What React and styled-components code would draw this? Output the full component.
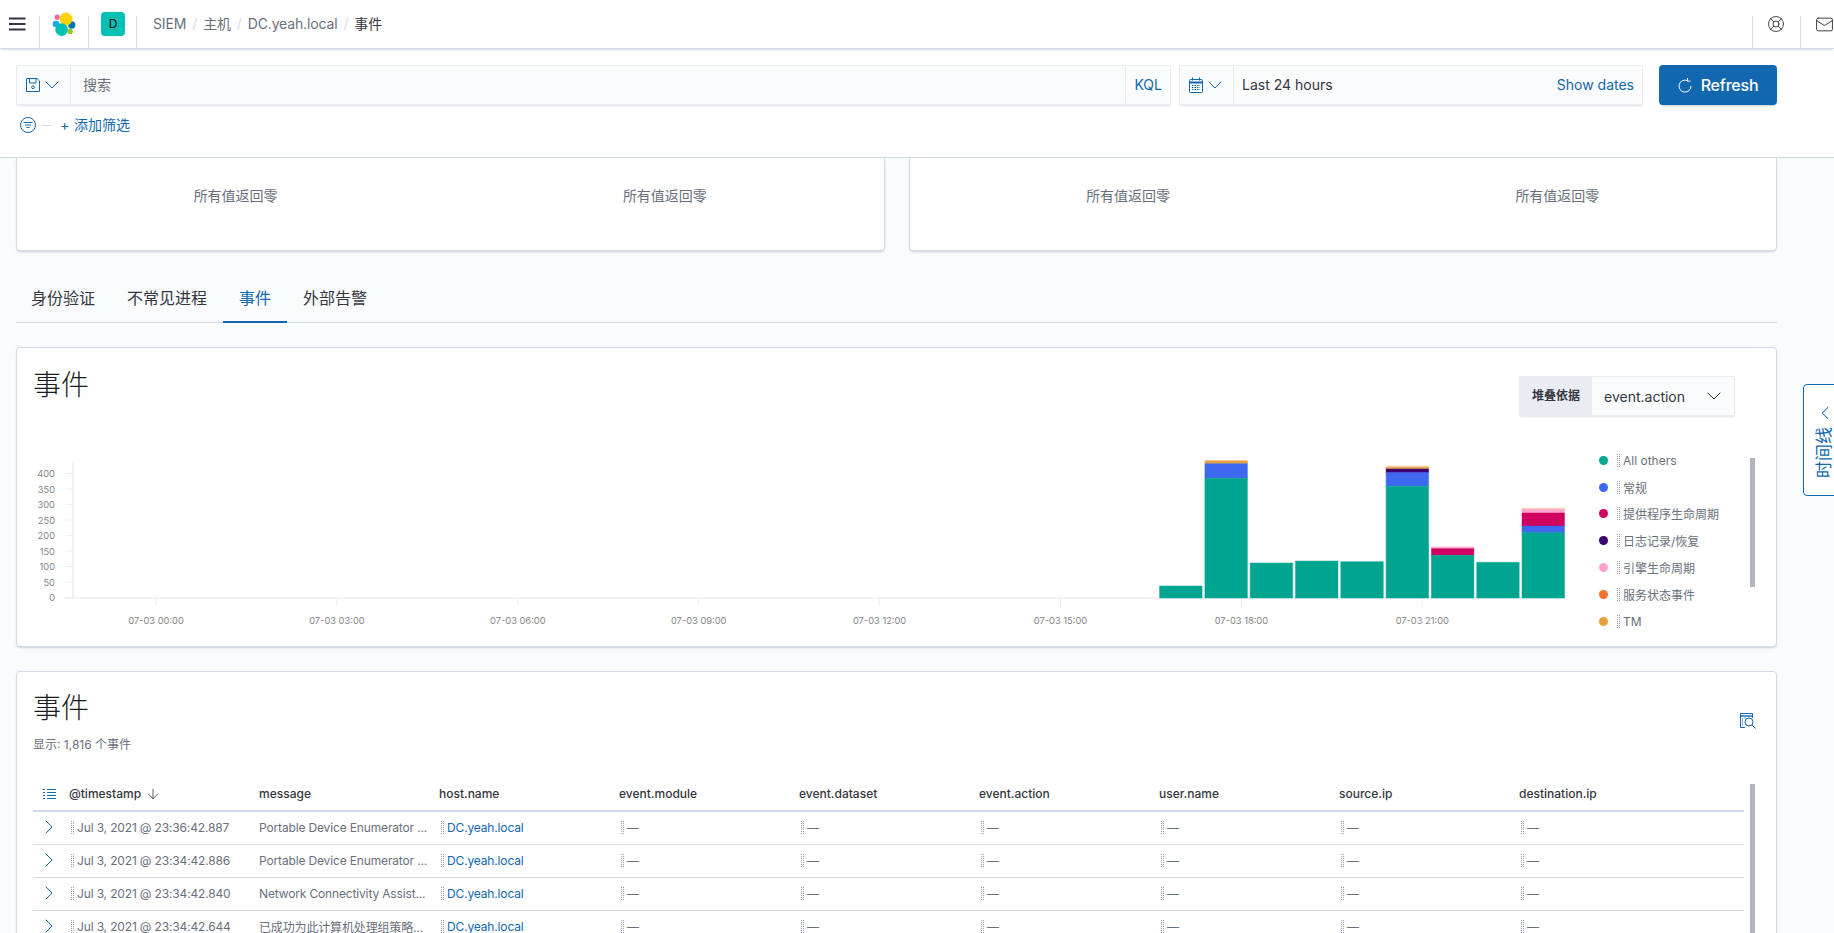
import styled, { createGlobalStyle } from "styled-components";
import { LifeBuoy, Mail, ChevronDown, ChevronLeft, ChevronRight, ArrowDown } from "lucide-react";

const PRIMARY = "#1268b0";
const BORDER = "#d3dae6";
const TEXT = "#343741";
const SUBDUED = "#69707d";
const SHADOW = "0 2px 2px -1px rgba(152,162,179,.35), 0 1px 5px -2px rgba(152,162,179,.35)";
const FONT = `Inter, "Noto Sans CJK SC", "Noto Sans", sans-serif`;

const GREEN = "#00a590";
const BLUE = "#3f68f0";
const RED = "#cf0060";
const PURPLE = "#3b0072";
const PINK = "#ffa3cc";
const ORANGE = "#f5722c";
const TAN = "#e7a03c";
const BEIGE = "#f5c9a8";

const BASELINE = 598;

// each bar is a list of [colour, top y] from the top of the stack down
const BARS = [
  [[GREEN, 586]],
  [[TAN, 460.7], [BLUE, 463.7], [GREEN, 478.3]],
  [[GREEN, 563]],
  [[GREEN, 561]],
  [[GREEN, 561.7]],
  [[BEIGE, 466], [TAN, 467.5], [PURPLE, 469], [BLUE, 472.7], [GREEN, 486.3]],
  [[PINK, 547], [RED, 548.7], [GREEN, 555.3]],
  [[GREEN, 562.3]],
  [[BEIGE, 508.3], [PINK, 509.3], [RED, 513], [BLUE, 526], [GREEN, 532.7]],
];

const Y_TICKS = [400, 350, 300, 250, 200, 150, 100, 50, 0];
const X_TICKS = ["00:00", "03:00", "06:00", "09:00", "12:00", "15:00", "18:00", "21:00"];

const LEGEND = [
  { color: GREEN, label: "All others" },
  { color: BLUE, label: "常规" },
  { color: RED, label: "提供程序生命周期" },
  { color: PURPLE, label: "日志记录/恢复" },
  { color: PINK, label: "引擎生命周期" },
  { color: ORANGE, label: "服务状态事件" },
  { color: TAN, label: "TM" },
];

const COLUMNS = ["event.module", "event.dataset", "event.action", "user.name", "source.ip", "destination.ip"];

const ROWS = [
  { time: "Jul 3, 2021 @ 23:36:42.887", message: "Portable Device Enumerator ..." },
  { time: "Jul 3, 2021 @ 23:34:42.886", message: "Portable Device Enumerator ..." },
  { time: "Jul 3, 2021 @ 23:34:42.840", message: "Network Connectivity Assist..." },
  { time: "Jul 3, 2021 @ 23:34:42.644", message: "已成功为此计算机处理组策略..." },
];

function MenuIcon() {
  return (
    <svg width="17" height="14" viewBox="0 0 17 14" fill="#343741">
      <rect x="0" y="0.5" width="16.5" height="2" />
      <rect x="0" y="6" width="16.5" height="2" />
      <rect x="0" y="11.5" width="16.5" height="2" />
    </svg>
  );
}

function ElasticLogo() {
  return (
    <svg width="24" height="24" viewBox="0 0 24 24">
      <circle cx="5.2" cy="5.2" r="2.6" fill="#f04e98" opacity="0.85" />
      <ellipse cx="4" cy="12" rx="3.4" ry="3.2" fill="#1ba9f5" />
      <ellipse cx="19.8" cy="13" rx="3.6" ry="3.8" fill="#0077a8" />
      <circle cx="14" cy="7" r="6.4" fill="#fed10a" />
      <circle cx="18.2" cy="19.4" r="2.6" fill="#93c90e" />
      <circle cx="9.6" cy="17.6" r="6.3" fill="#00bfb3" />
    </svg>
  );
}

function SaveIcon() {
  return (
    <svg width="14" height="14" viewBox="0 0 14 14" fill="none" stroke={PRIMARY} strokeWidth="1">
      <path d="M.5.5h10.6l2.4 2.4v10.6H.5z" />
      <path d="M3.5.5v4.5h6.5V.5" />
      <circle cx="7" cy="9.2" r="1.4" />
    </svg>
  );
}

function CalendarIcon() {
  return (
    <svg width="14" height="16" viewBox="0 0 14 16" fill="none" stroke={PRIMARY} strokeWidth="1">
      <rect x="0.5" y="2.5" width="13" height="13" rx="1" />
      <path d="M0.5 5.5h13" strokeWidth="2" />
      <path d="M3.5 0.5v3M10.5 0.5v3" />
      <path d="M3 8.5h8M3 10.5h8M3 12.5h8" strokeDasharray="1.5 1" />
    </svg>
  );
}

function RefreshIcon() {
  return (
    <svg width="14" height="16" viewBox="0 0 14 16" fill="none" stroke="#fff" strokeWidth="1">
      <path d="M9.4 3.6a6 6 0 1 0 3.6 5.4" />
      <path d="M9.5 1v3.2h3" />
    </svg>
  );
}

function FilterIcon() {
  return (
    <svg width="16" height="16" viewBox="0 0 16 16" fill="none" stroke={PRIMARY} strokeWidth="1">
      <circle cx="8" cy="8" r="7.5" />
      <path d="M3.5 5.5h9M5 8h6M6.5 10.5h3" />
    </svg>
  );
}

function InspectIcon() {
  return (
    <svg width="16" height="16" viewBox="0 0 16 16" fill="none" stroke={PRIMARY} strokeWidth="1">
      <path d="M5 14.5H.5V.5h12V5" />
      <path d="M1 3h11" strokeWidth="1.4" />
      <path d="M2.5 5.5v7M4.5 4.8h1" strokeDasharray="1 1" />
      <circle cx="9" cy="9" r="4" />
      <path d="M12 12l3.5 3.5" />
    </svg>
  );
}

function ColumnsIcon() {
  return (
    <svg width="13" height="12" viewBox="0 0 13 12" fill="none" stroke={PRIMARY} strokeWidth="1">
      <path d="M0 1.5h2M4 1.5h9M0 4.5h2M4 4.5h9M0 7.5h2M4 7.5h9M0 10.5h2M4 10.5h9" />
    </svg>
  );
}

function EventsChart() {
  return (
    <ChartSvg viewBox="34 455 1560 190" width="1560" height="190">
      <line x1="73" y1="461" x2="73" y2={BASELINE} stroke="#eeeeee" strokeWidth="1.5" />
      <line x1="65" y1={BASELINE} x2="1564" y2={BASELINE} stroke="#eeeeee" strokeWidth="1.5" />
      {Y_TICKS.map((tick, i) => {
        const y = 473.5 + i * 15.5;
        return (
          <g key={tick}>
            <line x1="65" y1={y} x2="73" y2={y} stroke="#eeeeee" />
            <AxisLabel x="55" y={y + 3.5} textAnchor="end">
              {tick}
            </AxisLabel>
          </g>
        );
      })}
      {X_TICKS.map((tick, i) => {
        const x = 156 + i * 180.9;
        return (
          <g key={tick}>
            <line x1={x} y1={BASELINE} x2={x} y2="606" stroke="#eeeeee" />
            <AxisLabel x={x} y="623.5" textAnchor="middle">
              07-03 {tick}
            </AxisLabel>
          </g>
        );
      })}
      {BARS.map((segments, i) =>
        segments.map(([color, top], j) => {
          const bottom = j + 1 < segments.length ? segments[j + 1][1] : BASELINE;
          return (
            <rect
              key={`${i}-${j}`}
              x={1159.6 + i * 45.3}
              y={top}
              width="42.5"
              height={bottom - top}
              fill={color}
              stroke={color}
              strokeOpacity="0.45"
              strokeWidth="1"
            />
          );
        })
      )}
    </ChartSvg>
  );
}

export default function App() {
  return (
    <Page>
      <GlobalStyle />
      <Header>
        <MenuSection $width={40}>
          <MenuIcon />
        </MenuSection>
        <LogoSection $width={49}>
          <ElasticLogo />
        </LogoSection>
        <HeaderSection $width={48}>
          <Avatar>D</Avatar>
        </HeaderSection>
        <Breadcrumbs>
          <Crumb>SIEM</Crumb>
          <Slash>/</Slash>
          <Crumb>主机</Crumb>
          <Slash>/</Slash>
          <Crumb>DC.yeah.local</Crumb>
          <Slash>/</Slash>
          <Crumb $current>事件</Crumb>
        </Breadcrumbs>
        <HeaderRight>
          <HeaderSection $width={48} $divider>
            <LifeBuoy size={18} color={TEXT} strokeWidth={1.2} />
          </HeaderSection>
          <HeaderSection $width={48} $divider>
            <Mail size={19} color={TEXT} strokeWidth={1.2} />
          </HeaderSection>
        </HeaderRight>
      </Header>

      <QueryBar>
        <QueryRow>
          <SearchBox>
            <Prepend $width={54}>
              <SaveIcon />
              <ChevronDown size={24} color={PRIMARY} strokeWidth={1} />
            </Prepend>
            <SearchText>搜索</SearchText>
            <Kql>KQL</Kql>
          </SearchBox>
          <DateBox>
            <Prepend $width={54}>
              <CalendarIcon />
              <ChevronDown size={24} color={PRIMARY} strokeWidth={1} />
            </Prepend>
            <DateText>Last 24 hours</DateText>
            <ShowDates>Show dates</ShowDates>
          </DateBox>
          <RefreshButton>
            <RefreshIcon />
            Refresh
          </RefreshButton>
        </QueryRow>
        <FilterRow>
          <FilterIcon />
          <FilterDash />
          <AddFilter>
            <span>+</span>添加筛选
          </AddFilter>
        </FilterRow>
      </QueryBar>

      <Content>
        <StatRow>
          <StatCard>
            <StatValue>所有值返回零</StatValue>
            <StatValue>所有值返回零</StatValue>
          </StatCard>
          <StatCard>
            <StatValue>所有值返回零</StatValue>
            <StatValue>所有值返回零</StatValue>
          </StatCard>
        </StatRow>

        <Tabs>
          <Tab>身份验证</Tab>
          <Tab>不常见进程</Tab>
          <Tab $active>事件</Tab>
          <Tab>外部告警</Tab>
        </Tabs>

        <ChartCard>
          <ChartHeader>
            <CardTitle>事件</CardTitle>
            <StackSelect>
              <StackLabel>堆叠依据</StackLabel>
              <StackValue>
                event.action
                <ChevronDown size={24} color={TEXT} strokeWidth={1} />
              </StackValue>
            </StackSelect>
          </ChartHeader>
          <ChartBody>
            <EventsChart />
            <Legend>
              {LEGEND.map((item) => (
                <LegendItem key={item.label}>
                  <LegendDot $color={item.color} />
                  <DragHandle />
                  {item.label}
                </LegendItem>
              ))}
            </Legend>
            <LegendThumb />
          </ChartBody>
        </ChartCard>

        <TableCard>
          <TableHeader>
            <div>
              <CardTitle>事件</CardTitle>
              <EventCount>显示: 1,816 个事件</EventCount>
            </div>
            <InspectButton>
              <InspectIcon />
            </InspectButton>
          </TableHeader>
          <TableArea>
            <Table>
              <HeadRow>
                <ExpandCell>
                  <ColumnsIcon />
                </ExpandCell>
                <TimeCell>
                  @timestamp
                  <ArrowDown size={16} color={TEXT} strokeWidth={1.2} />
                </TimeCell>
                <Cell>message</Cell>
                <Cell>host.name</Cell>
                {COLUMNS.map((name, i) => (
                  <Cell key={name} $last={i === COLUMNS.length - 1}>
                    {name}
                  </Cell>
                ))}
              </HeadRow>
              {ROWS.map((row) => (
                <BodyRow key={row.time}>
                  <ExpandCell>
                    <ChevronRight size={24} color={PRIMARY} strokeWidth={1} />
                  </ExpandCell>
                  <TimeCell>
                    <DragHandle />
                    {row.time}
                  </TimeCell>
                  <MessageCell>{row.message}</MessageCell>
                  <Cell>
                    <DragHandle />
                    <HostLink>DC.yeah.local</HostLink>
                  </Cell>
                  {COLUMNS.map((name, i) => (
                    <Cell key={name} $last={i === COLUMNS.length - 1}>
                      <DragHandle />—
                    </Cell>
                  ))}
                </BodyRow>
              ))}
            </Table>
            <TableThumb />
          </TableArea>
        </TableCard>
      </Content>

      <TimelineTab>
        <ChevronLeft size={22} color={PRIMARY} strokeWidth={1.1} />
        <TimelineLabel>时间线</TimelineLabel>
      </TimelineTab>
    </Page>
  );
}

const GlobalStyle = createGlobalStyle`
  html, body {
    margin: 0;
    height: 100%;
    overflow: hidden;
    background: #fafbfd;
  }
  * {
    box-sizing: border-box;
  }
`;

const Page = styled.div`
  position: relative;
  width: 1834px;
  height: 933px;
  overflow: hidden;
  font-family: ${FONT};
  color: ${TEXT};
  background: #fafbfd;
`;

const Header = styled.header`
  display: flex;
  height: 49px;
  background: #fff;
  border-bottom: 1px solid ${BORDER};
  box-shadow: 0 2px 2px -1px rgba(152, 162, 179, 0.4);
  position: relative;
  z-index: 2;
`;

const HeaderSection = styled.div`
  position: relative;
  flex: none;
  display: flex;
  align-items: center;
  justify-content: center;
  width: ${(props) => props.$width}px;
  height: 48px;

  &::after {
    content: "";
    position: absolute;
    top: 16px;
    bottom: 0;
    width: 1px;
    background: ${BORDER};
    ${(props) => (props.$divider ? "left: 0;" : "right: 0;")}
  }
`;

const MenuSection = styled(HeaderSection)`
  padding-right: 6px;
`;

const LogoSection = styled(HeaderSection)`
  padding-right: 2px;
`;

const Avatar = styled.div`
  width: 24px;
  height: 24px;
  border-radius: 4px;
  background: #00bfb3;
  color: #000;
  font-size: 12px;
  line-height: 24px;
  text-align: center;
`;

const Breadcrumbs = styled.nav`
  display: flex;
  align-items: center;
  flex: 1;
  padding: 0 0 2px 16px;
  font-size: 14px;
  letter-spacing: -0.15px;
`;

const Crumb = styled.span`
  color: ${(props) => (props.$current ? TEXT : SUBDUED)};
`;

const Slash = styled.span`
  color: ${BORDER};
  margin: 0 6px;
`;

const HeaderRight = styled.div`
  display: flex;
  flex: none;
  margin-right: -14px;
`;

const QueryBar = styled.section`
  height: 109px;
  padding: 16px 57px 0 16px;
  background: #fff;
  border-bottom: 1px solid ${BORDER};
`;

const QueryRow = styled.div`
  display: flex;
  height: 40px;
`;

const InputShell = styled.div`
  display: flex;
  align-items: center;
  height: 40px;
  background: #fbfcfd;
  border: 1px solid #e9edf3;
  box-shadow: 0 2px 2px -1px rgba(152, 162, 179, 0.3);
  font-size: 14px;
`;

const SearchBox = styled(InputShell)`
  flex: 1;
`;

const DateBox = styled(InputShell)`
  flex: none;
  width: 464px;
  margin-left: 8px;
`;

const Prepend = styled.div`
  flex: none;
  display: flex;
  align-items: center;
  justify-content: center;
  width: ${(props) => props.$width}px;
  height: 100%;
  padding-left: 3px;
  border-right: 1px solid #e9edf3;
`;

const SearchText = styled.span`
  flex: 1;
  padding: 0 0 2px 12px;
  color: ${SUBDUED};
`;

const Kql = styled.span`
  display: flex;
  align-items: center;
  height: 100%;
  padding: 0 8px 2px;
  border-left: 1px solid #e9edf3;
  color: ${PRIMARY};
`;

const DateText = styled.span`
  flex: 1;
  padding: 0 0 2px 8px;
`;

const ShowDates = styled.span`
  padding: 0 8px 2px 0;
  color: ${PRIMARY};
`;

const RefreshButton = styled.button`
  flex: none;
  display: flex;
  align-items: center;
  justify-content: center;
  gap: 9px;
  width: 118px;
  height: 40px;
  margin-left: 16px;
  padding: 0 0 1px;
  border: none;
  border-radius: 4px;
  background: ${PRIMARY};
  color: #fff;
  font-family: ${FONT};
  font-size: 16px;
  font-weight: 500;
  letter-spacing: -0.2px;
  box-shadow: 0 2px 2px -1px rgba(54, 97, 126, 0.3);
`;

const FilterRow = styled.div`
  display: flex;
  align-items: center;
  height: 20px;
  margin-top: 10px;
  padding-left: 4px;
`;

const FilterDash = styled.div`
  width: 10px;
  height: 1px;
  margin: 0 8px 0 6px;
  background: ${BORDER};
`;

const AddFilter = styled.span`
  padding-bottom: 2px;
  color: ${PRIMARY};
  font-size: 14px;

  span {
    display: inline-block;
    width: 14px;
  }
`;

const Content = styled.main`
  padding: 0 57px 0 16px;
`;

const StatRow = styled.div`
  display: flex;
  gap: 24px;
`;

const StatCard = styled.div`
  flex: 1;
  display: grid;
  grid-template-columns: 1fr 1fr;
  height: 93px;
  padding: 0 4px;
  background: #fff;
  border: 1px solid ${BORDER};
  border-top: none;
  border-radius: 0 0 4px 4px;
  box-shadow: ${SHADOW};
`;

const StatValue = styled.div`
  padding-top: 28px;
  font-size: 14px;
  line-height: 20px;
  text-align: center;
  color: ${SUBDUED};
`;

const Tabs = styled.div`
  display: flex;
  height: 48px;
  margin-top: 24px;
  border-bottom: 1px solid ${BORDER};
`;

const Tab = styled.div`
  height: 48px;
  padding: 0 16px;
  font-size: 16px;
  line-height: 47px;
  color: ${(props) => (props.$active ? PRIMARY : TEXT)};
  border-bottom: 2px solid ${(props) => (props.$active ? PRIMARY : "transparent")};

  &:first-child {
    padding-left: 15px;
  }
`;

const Card = styled.section`
  margin-top: 24px;
  padding-left: 17px;
  padding-right: 21px;
  background: #fff;
  border: 1px solid ${BORDER};
  border-radius: 4px;
  box-shadow: ${SHADOW};
`;

const ChartCard = styled(Card)`
  height: 300px;
  padding-top: 19px;
`;

const ChartHeader = styled.div`
  display: flex;
  justify-content: space-between;
  align-items: flex-start;
  height: 49px;
  padding-right: 20px;
`;

const CardTitle = styled.h2`
  margin: 0 0 0 -1px;
  font-size: 28px;
  font-weight: 300;
  line-height: 36px;
  color: #1a1c21;
`;

const StackSelect = styled.div`
  display: flex;
  width: 216px;
  height: 40px;
  margin-top: 9px;
  border: 1px solid #e9edf3;
  box-shadow: 0 2px 2px -1px rgba(152, 162, 179, 0.3);
`;

const StackLabel = styled.div`
  flex: none;
  width: 72px;
  background: #e9edf3;
  font-size: 12px;
  font-weight: 700;
  line-height: 38px;
  text-align: center;
`;

const StackValue = styled.div`
  flex: 1;
  display: flex;
  align-items: center;
  justify-content: space-between;
  padding: 0 8px 0 12px;
  background: #fbfcfd;
  font-size: 14px;
`;

const ChartBody = styled.div`
  display: flex;
  margin-top: 39px;
`;

const ChartSvg = styled.svg`
  display: block;
  flex: none;
`;

const AxisLabel = styled.text`
  font-family: ${FONT};
  font-size: 9.3px;
  fill: #858585;
`;

const Legend = styled.ul`
  flex: 1;
  margin: -8px 0 0 5px;
  padding: 0;
  list-style: none;
`;

const LegendItem = styled.li`
  display: flex;
  align-items: center;
  height: 26.8px;
  font-size: 12px;
  color: ${SUBDUED};
`;

const LegendDot = styled.span`
  flex: none;
  width: 9px;
  height: 9px;
  margin-right: 9px;
  border-radius: 50%;
  background: ${(props) => props.$color};
`;

const DragHandle = styled.span`
  display: inline-block;
  flex: none;
  width: 3px;
  height: 13px;
  margin-right: 3px;
  vertical-align: -2px;
  border-left: 1px dotted #98a2b3;
  border-right: 1px dotted #98a2b3;
`;

const Thumb = styled.div`
  flex: none;
  width: 5px;
  background: #b2b5bc;
`;

const LegendThumb = styled(Thumb)`
  height: 129px;
  margin-top: 3px;
`;

const TableCard = styled(Card)`
  padding-top: 18px;
  padding-left: 16px;
`;

const TableHeader = styled.div`
  display: flex;
  justify-content: space-between;
  padding-left: 1px;
  height: 87px;
`;

const EventCount = styled.div`
  margin: 10px 0 0 -1px;
  font-size: 12px;
  line-height: 18px;
  color: ${SUBDUED};
`;

const InspectButton = styled.div`
  margin-top: 23px;
  margin-right: -1px;
`;

const TableArea = styled.div`
  display: flex;
  gap: 6px;
`;

const Table = styled.div`
  flex: none;
  width: 1711px;
  font-size: 12px;
`;

const HeadRow = styled.div`
  display: flex;
  align-items: center;
  height: 35px;
  border-bottom: 2px solid ${BORDER};
  font-weight: 500;
`;

const BodyRow = styled.div`
  display: flex;
  align-items: center;
  height: 33px;
  padding-bottom: 2px;
  border-bottom: 1px solid ${BORDER};
  color: ${SUBDUED};
  letter-spacing: -0.15px;
`;

const ExpandCell = styled.div`
  flex: none;
  display: flex;
  justify-content: center;
  width: 36px;
  padding-right: 4px;
`;

const TimeCell = styled.div`
  flex: none;
  display: flex;
  align-items: center;
  gap: 4px;
  width: 190px;

  ${BodyRow} & {
    gap: 0;
    padding-left: 2px;
  }
`;

const Cell = styled.div`
  flex: none;
  width: ${(props) => (props.$last ? "225px" : "180px")};
  white-space: nowrap;

  ${BodyRow} & {
    padding-left: 2px;
  }
`;

const MessageCell = styled.div`
  flex: none;
  width: 180px;
  white-space: nowrap;
`;

const HostLink = styled.span`
  color: ${PRIMARY};
`;

const TableThumb = styled(Thumb)`
  margin-top: 7px;
`;

const TimelineTab = styled.aside`
  position: absolute;
  top: 384px;
  left: 1803px;
  width: 40px;
  height: 112px;
  display: flex;
  flex-direction: column;
  gap: 3px;
  padding: 17px 0 0 10px;
  background: #fff;
  border: 1px solid ${PRIMARY};
  border-radius: 4px;
`;

const TimelineLabel = styled.span`
  writing-mode: vertical-rl;
  text-orientation: sideways;
  transform: rotate(180deg);
  align-self: flex-start;
  font-size: 17px;
  line-height: 20px;
  color: ${PRIMARY};
`;
